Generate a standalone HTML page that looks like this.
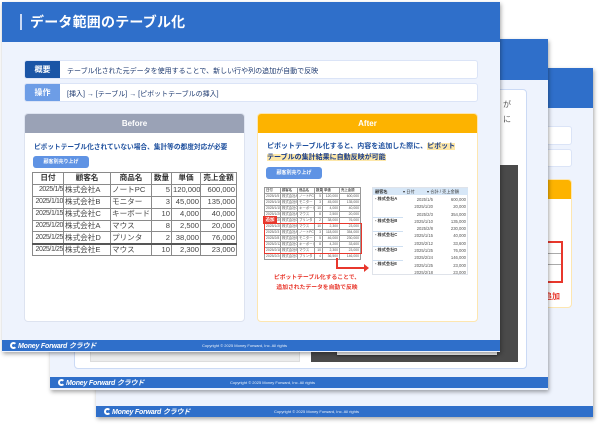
<!DOCTYPE html>
<html><head><meta charset="utf-8">
<style>
*{margin:0;padding:0;box-sizing:border-box}
body{width:600px;height:424px;background:#fff;position:relative;overflow:hidden;font-family:"Liberation Sans","Noto Sans CJK JP",sans-serif}
.a{position:absolute}
.slide{position:absolute;background:#eef3fd;box-shadow:1px 2px 4px rgba(0,0,0,.35)}
.hd{position:absolute;left:0;top:0;right:0;background:#2f6fca}
.ft{position:absolute;left:0;right:0;height:11px;background:#2f6fca;color:#fff}
.logo{position:absolute;left:8px;top:1px;font-size:7px;font-weight:bold;font-style:italic;letter-spacing:-.2px;white-space:nowrap}
.logo b{display:inline-block;width:7px;height:7px;border:2px solid #fff;border-right-color:transparent;border-radius:50%;vertical-align:-1px;margin-right:1px}
.copy{position:absolute;top:3px;font-size:4px;white-space:nowrap;opacity:.9}
.box{position:absolute;background:#fff;border:1px solid #dbe4f7;border-radius:3px}
table{border-collapse:collapse;position:absolute;table-layout:fixed}
.bt td,.bt th{border:1px solid #8a8a8a;height:11.9px;font-size:7.6px;color:#444;padding:0 1px;white-space:nowrap;overflow:hidden;font-weight:normal;line-height:10px}
.bt th{font-weight:bold;text-align:center;color:#333}
.bt td.d{font-size:7px;letter-spacing:-.4px;padding:0}
.r{text-align:right}
.st td{border:0.5px solid #999;font-size:3.4px;height:5.6px;padding:0 1px;color:#555;white-space:nowrap;overflow:hidden;line-height:5px}
.pv div{position:absolute;font-size:4.2px;color:#555;white-space:nowrap}
.btn{position:absolute;background:#5f93e4;color:#fff;border-radius:3px;font-size:5px;text-align:center;font-weight:bold}
</style></head><body>

<!-- slide 3 -->
<div class="slide" style="left:96px;top:68px;width:497px;height:349px">
 <div class="hd" style="height:40px"></div>
 <div class="box" style="left:19px;top:58px;width:457px;height:19px"></div>
 <div class="box" style="left:19px;top:81px;width:457px;height:18px"></div>
 <div class="a" style="left:287px;top:111px;width:189px;height:129px;background:#fff;border:1px solid #fde6b0;border-radius:4px;overflow:hidden">
  <div class="a" style="left:0;top:0;right:0;height:19px;background:#fdb300"></div>
 </div>
 <div class="a" style="left:440px;top:173px;width:27px;height:42px;border:2px solid #e8372c"></div>
 <div class="a" style="left:442px;top:185px;width:23px;height:1px;background:#aaa"></div>
 <div class="a" style="left:442px;top:196px;width:23px;height:1px;background:#aaa"></div>
 <div class="a" style="left:440px;top:223px;font-size:8px;font-weight:bold;color:#e8372c">で追加</div>
 <div class="ft" style="top:338px"><div class="logo"><b></b>Money Forward クラウド</div><div class="copy" style="left:178px">Copyright © 2025 Money Forward, Inc. All rights</div></div>
</div>

<!-- slide 2 -->
<div class="slide" style="left:50px;top:39px;width:498px;height:351px">
 <div class="hd" style="height:41px"></div>
 <div class="a" style="left:24px;top:50px;width:453px;height:280px;background:#fff;border:1px solid #cbdaf5;border-radius:4px"></div>
 <div class="a" style="left:453px;top:60px;font-size:8px;color:#555">が</div>
 <div class="a" style="left:453px;top:75px;font-size:8px;color:#555">に</div>
 <div class="a" style="left:40px;top:200px;width:210px;height:123px;background:#ececec;border:1px solid #ddd"></div>
 <div class="a" style="left:261px;top:126px;width:207px;height:197px;background:#4a4a4a"></div>
 <div class="a" style="left:287px;top:130px;width:160px;height:186px;background:#f0f0f0;box-shadow:0 1px 2px rgba(0,0,0,.4)"></div>
 <div class="ft" style="top:338px"><div class="logo"><b></b>Money Forward クラウド</div><div class="copy" style="left:180px">Copyright © 2025 Money Forward, Inc. All rights</div></div>
</div>

<!-- slide 1 -->
<div class="slide" style="left:2px;top:2px;width:498px;height:350px">
 <div class="hd" style="height:40px">
  <div class="a" style="left:18px;top:12px;width:2px;height:16px;background:#c9d9f5"></div>
  <div class="a" style="left:28px;top:10px;font-size:14px;font-weight:bold;color:#fff;letter-spacing:.2px">データ範囲のテーブル化</div>
 </div>
 <div class="box" style="left:22px;top:58px;width:454px;height:19px;overflow:hidden">
  <div class="a" style="left:0;top:0;width:35px;height:19px;background:#1a55a6;color:#fff;font-size:8px;font-weight:bold;text-align:center;line-height:18px">概要</div>
  <div class="a" style="left:42px;top:5px;font-size:7px;color:#1e3a70;white-space:nowrap">テーブル化された元データを使用することで、新しい行や列の追加が自動で反映</div>
 </div>
 <div class="box" style="left:22px;top:81px;width:454px;height:19px;overflow:hidden">
  <div class="a" style="left:0;top:0;width:35px;height:19px;background:#6d9de6;color:#fff;font-size:8px;font-weight:bold;text-align:center;line-height:18px">操作</div>
  <div class="a" style="left:42px;top:5px;font-size:7px;color:#1e3a70;white-space:nowrap">[挿入] → [テーブル] → [ピボットテーブルの挿入]</div>
 </div>

 <!-- before -->
 <div class="a" style="left:22px;top:111px;width:221px;height:209px;background:#fff;border:1px solid #dde3f0;border-radius:4px;overflow:hidden">
  <div class="a" style="left:0;top:0;right:0;height:19px;background:#9aa2b6;color:#fff;font-size:8px;font-weight:bold;text-align:center;line-height:19px">Before</div>
  <div class="a" style="left:9px;top:27px;font-size:6.7px;font-weight:bold;color:#1d4f9e;white-space:nowrap">ピボットテーブル化されていない場合、集計等の都度対応が必要</div>
 </div>
 <div class="btn" style="left:31px;top:154px;width:56px;height:12px;line-height:12px">顧客別売り上げ</div>
 <table class="bt" style="left:30px;top:170px;width:204px">
  <colgroup><col style="width:31px"><col style="width:47px"><col style="width:41px"><col style="width:20px"><col style="width:29px"><col style="width:36px"></colgroup>
  <tr><th>日付</th><th>顧客名</th><th>商品名</th><th>数量</th><th>単価</th><th>売上金額</th></tr>
  <tr><td class="r d">2025/1/5</td><td>株式会社A</td><td>ノートPC</td><td class="r">5</td><td class="r">120,000</td><td class="r">600,000</td></tr>
  <tr><td class="r d">2025/1/10</td><td>株式会社B</td><td>モニター</td><td class="r">3</td><td class="r">45,000</td><td class="r">135,000</td></tr>
  <tr><td class="r d">2025/1/15</td><td>株式会社C</td><td>キーボード</td><td class="r">10</td><td class="r">4,000</td><td class="r">40,000</td></tr>
  <tr><td class="r d">2025/1/20</td><td>株式会社A</td><td>マウス</td><td class="r">8</td><td class="r">2,500</td><td class="r">20,000</td></tr>
  <tr><td class="r d">2025/1/25</td><td>株式会社D</td><td>プリンタ</td><td class="r">2</td><td class="r">38,000</td><td class="r">76,000</td></tr>
  <tr style="border-top:2px solid #555"><td class="r d">2025/1/25</td><td>株式会社E</td><td>マウス</td><td class="r">10</td><td class="r">2,300</td><td class="r">23,000</td></tr>
 </table>

 <!-- after -->
 <div class="a" style="left:255px;top:111px;width:221px;height:209px;background:#fff;border:1px solid #fde6b0;border-radius:4px;overflow:hidden">
  <div class="a" style="left:0;top:0;right:0;height:19px;background:#fdb300;color:#fff;font-size:8px;font-weight:bold;text-align:center;line-height:19px">After</div>
  <div class="a" style="left:9px;top:27px;font-size:7px;font-weight:bold;color:#1d4f9e;line-height:11px;white-space:nowrap">ピボットテーブル化すると、内容を追加した際に、<span style="background:#fde7a8;color:#1a3d8a">ピボット</span><br><span style="background:#fde7a8;color:#1a3d8a">テーブルの集計結果に自動反映が可能</span></div>
 </div>
 <div class="btn" style="left:264px;top:165px;width:56px;height:12px;line-height:12px">顧客別売り上げ</div>
 <table class="st" style="left:262px;top:185px;width:96px">
  <colgroup><col style="width:16px"><col style="width:17px"><col style="width:17px"><col style="width:8px"><col style="width:17px"><col style="width:21px"></colgroup>
  <tr style="font-weight:bold"><td>日付</td><td>顧客名</td><td>商品名</td><td>数量</td><td>単価</td><td>売上金額</td></tr>
  <tr><td class="r">2025/1/5</td><td>株式会社A</td><td>ノートPC</td><td class="r">5</td><td class="r">120,000</td><td class="r">600,000</td></tr>
  <tr><td class="r">2025/1/10</td><td>株式会社B</td><td>モニター</td><td class="r">3</td><td class="r">45,000</td><td class="r">135,000</td></tr>
  <tr><td class="r">2025/1/15</td><td>株式会社C</td><td>キーボード</td><td class="r">10</td><td class="r">4,000</td><td class="r">40,000</td></tr>
  <tr><td class="r">2025/1/20</td><td>株式会社A</td><td>マウス</td><td class="r">8</td><td class="r">2,500</td><td class="r">20,000</td></tr>
  <tr><td class="r">2025/1/25</td><td>株式会社D</td><td>プリンタ</td><td class="r">2</td><td class="r">38,000</td><td class="r">76,000</td></tr>
  <tr><td class="r">2025/1/25</td><td>株式会社E</td><td>マウス</td><td class="r">10</td><td class="r">2,300</td><td class="r">23,000</td></tr>
  <tr><td class="r">2025/2/3</td><td>株式会社A</td><td>ノートPC</td><td class="r">3</td><td class="r">118,000</td><td class="r">354,000</td></tr>
  <tr><td class="r">2025/2/8</td><td>株式会社B</td><td>モニター</td><td class="r">5</td><td class="r">46,000</td><td class="r">230,000</td></tr>
  <tr><td class="r">2025/2/12</td><td>株式会社C</td><td>キーボード</td><td class="r">8</td><td class="r">4,200</td><td class="r">33,600</td></tr>
  <tr><td class="r">2025/2/18</td><td>株式会社E</td><td>マウス</td><td class="r">10</td><td class="r">2,300</td><td class="r">23,000</td></tr>
  <tr><td class="r">2025/2/24</td><td>株式会社D</td><td>プリンタ</td><td class="r">4</td><td class="r">36,500</td><td class="r">146,000</td></tr>
 </table>
 <div class="a" style="left:262px;top:221px;width:98px;height:31px;border:1.5px solid #e8372c"></div>
 <div class="a" style="left:261px;top:214px;width:14px;height:8px;background:#e8372c;color:#fff;font-size:4.5px;font-weight:bold;text-align:center;line-height:8px">追加</div>
 <div class="a" style="left:334px;top:256px;width:2px;height:11px;background:#e8372c"></div>
 <div class="a" style="left:334px;top:265px;width:29px;height:2px;background:#e8372c"></div>
 <div class="a" style="left:362px;top:262px;width:0;height:0;border-left:5px solid #e8372c;border-top:4px solid transparent;border-bottom:4px solid transparent"></div>
 <div class="a" style="left:268px;top:271px;width:94px;text-align:center;font-size:5.8px;font-weight:bold;color:#e8372c;line-height:10px">ピボットテーブル化することで、<br>追加されたデータを自動で反映</div>

 <div class="a pv" style="left:370px;top:185px;width:96px;height:88px;background:#fff;border:1px solid #dfe3ea">
  <div style="left:0;top:0;width:95px;height:7px;background:#d7e7f7"></div>
  <div style="left:2px;top:1px;font-weight:bold;color:#333">顧客名</div>
  <div style="left:30px;top:1px;color:#333">▾ 日付</div>
  <div style="left:54px;top:1px;color:#333">▾ 合計 / 売上金額</div>
  <div style="left:2px;top:8px;font-weight:bold;color:#333">- 株式会社A</div>
  <div style="left:2px;top:30px;font-weight:bold;color:#333">- 株式会社B</div>
  <div style="left:2px;top:44px;font-weight:bold;color:#333">- 株式会社C</div>
  <div style="left:2px;top:59px;font-weight:bold;color:#333">- 株式会社D</div>
  <div style="left:2px;top:73px;font-weight:bold;color:#333">- 株式会社E</div>
  <div style="left:0;top:29px;width:30px;height:1px;background:#cfe0f2"></div>
  <div style="left:0;top:43px;width:30px;height:1px;background:#cfe0f2"></div>
  <div style="left:0;top:58px;width:30px;height:1px;background:#cfe0f2"></div>
  <div style="left:0;top:72px;width:30px;height:1px;background:#cfe0f2"></div>
  <div style="left:34px;top:8px;width:26px;text-align:right;line-height:7.3px">2025/1/5<br>2025/1/20<br>2025/2/3<br>2025/1/10<br>2025/2/8<br>2025/1/15<br>2025/2/12<br>2025/1/25<br>2025/2/24<br>2025/1/25<br>2025/2/18</div>
  <div style="left:62px;top:8px;width:31px;text-align:right;line-height:7.3px">600,000<br>20,000<br>354,000<br>135,000<br>230,000<br>40,000<br>33,600<br>76,000<br>146,000<br>23,000<br>23,000</div>
 </div>

 <div class="ft" style="top:338px"><div class="logo"><b></b>Money Forward クラウド</div><div class="copy" style="left:200px">Copyright © 2025 Money Forward, Inc. All rights</div></div>
</div>
</body></html>
